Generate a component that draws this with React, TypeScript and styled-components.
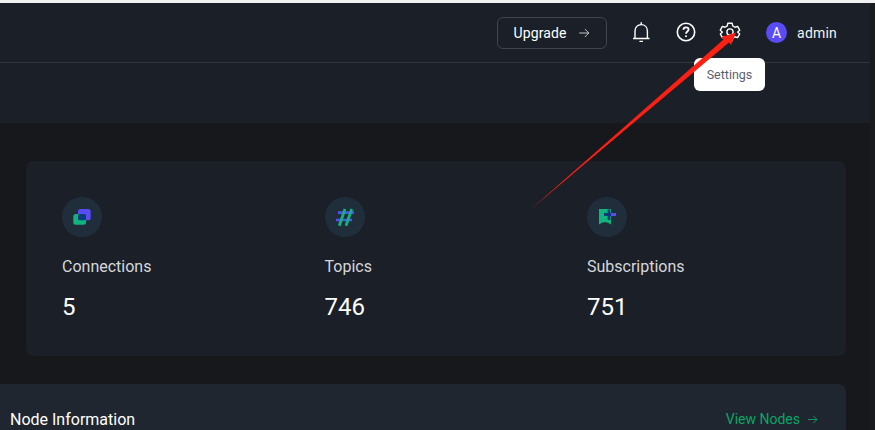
import * as React from "react"
import styled, { createGlobalStyle } from "styled-components"

const GlobalStyle = createGlobalStyle`
  html, body {
    margin: 0;
    padding: 0;
    height: 430px;
    overflow: hidden;
    background: #1a1b1d;
    font-family: Roboto, "Liberation Sans", sans-serif;
  }
`

const stats = [
  { label: "Connections", value: "5", icon: "connections" },
  { label: "Topics", value: "746", icon: "topics" },
  { label: "Subscriptions", value: "751", icon: "subscriptions" },
]

function StatGlyph({ kind }: { kind: string }) {
  if (kind === "connections") {
    return (
      <svg width="20" height="20" viewBox="0 0 20 20">
        <rect x="6" y="2" width="12.7" height="11.3" rx="2.5" fill="#5a4cf5" />
        <rect x="1.3" y="7" width="12.7" height="10.7" rx="2.5" fill="#0fb57c" />
        <rect x="6" y="7" width="8" height="6.3" rx="1.5" fill="#0b3a7d" />
      </svg>
    )
  }
  if (kind === "topics") {
    return (
      <svg width="20" height="20" viewBox="0 0 20 20">
        <path d="M3 5.6H19M1 13H17" stroke="#5a4cf5" strokeWidth="2.6" fill="none" />
        <path d="M10 2L4.3 18.7M16.7 2L11 18.7" stroke="#0fb57c" strokeWidth="2.8" fill="none" />
      </svg>
    )
  }
  return (
    <svg width="20" height="20" viewBox="0 0 20 20">
      <path d="M2 2H14V17.5Q8 12.5 2 17.5Z" fill="#0fb57c" />
      <path d="M7 7.5H19" stroke="#5a4cf5" strokeWidth="3" fill="none" />
      <path d="M7 7.5H14" stroke="#0b3a7d" strokeWidth="3" fill="none" />
      <path d="M12 2.5V13" stroke="#0b3a7d" strokeWidth="2.6" fill="none" />
    </svg>
  )
}

function ArrowRight({ size }: { size: number }) {
  return (
    <svg width={size} height={size} viewBox="0 0 16 16" fill="none" stroke="currentColor" strokeWidth="1.1">
      <path d="M2.5 8H13.5M9 3.5L13.5 8L9 12.5" />
    </svg>
  )
}

export default function App() {
  return (
    <>
      <GlobalStyle />
      <Page>
        <TopEdge />
        <Header>
          <UpgradeButton>
            Upgrade
            <ArrowRight size={14} />
          </UpgradeButton>
          <IconSlot>
            <svg width="22" height="22" viewBox="0 0 22 22" fill="none" stroke="#fff" strokeWidth="1.4">
              <path d="M3 17.5H19.5M5 17.5V10C5 6.2 7.6 3.6 11.2 3.6C14.8 3.6 17.4 6.2 17.4 10V17.5" />
              <path d="M11.2 1.6V3.2M10 20.4H12.4" strokeLinecap="round" />
            </svg>
          </IconSlot>
          <IconSlot>
            <svg width="22" height="22" viewBox="0 0 22 22" fill="none" stroke="#fff">
              <circle cx="11" cy="11" r="8.7" strokeWidth="1.6" />
              <path d="M8.4 8.8C8.4 7.2 9.6 6.3 11 6.3C12.5 6.3 13.6 7.2 13.6 8.6C13.6 10.5 11 10.6 11 12.8" strokeWidth="1.8" />
              <path d="M11 14.4V16" strokeWidth="1.9" />
            </svg>
          </IconSlot>
          <IconSlot>
            <svg width="22" height="22" viewBox="0 0 24 24" fill="none" stroke="#fff" strokeWidth="1.5" strokeLinejoin="round">
              <path d="M9.6 2.5H14.4L15 5.4L17.4 6.8L20.3 5.9L22.6 10L20.4 12L20.4 12.2L22.6 14.1L20.3 18.2L17.4 17.2L15 18.7L14.4 21.5H9.6L9 18.7L6.6 17.2L3.7 18.2L1.4 14.1L3.6 12.2V11.9L1.4 10L3.7 5.9L6.6 6.8L9 5.4Z" />
              <circle cx="12" cy="12" r="3.4" />
            </svg>
          </IconSlot>
          <UserBlock>
            <Avatar>A</Avatar>
            <UserName>admin</UserName>
          </UserBlock>
        </Header>
        <SubHeader />
        <Main>
          <StatsCard>
            {stats.map(stat => (
              <Stat key={stat.label}>
                <StatIcon>
                  <StatGlyph kind={stat.icon} />
                </StatIcon>
                <StatLabel>{stat.label}</StatLabel>
                <StatValue>{stat.value}</StatValue>
              </Stat>
            ))}
          </StatsCard>
          <NodeCard>
            <NodeTitle>Node Information</NodeTitle>
            <NodeLink>
              View Nodes
              <ArrowRight size={13} />
            </NodeLink>
          </NodeCard>
        </Main>
        <Tooltip>Settings</Tooltip>
        <Annotation width="875" height="430" viewBox="0 0 875 430">
          <path d="M530 210L723.5 39.5L721.5 37L736 32.5L731 45L729 42.5Z" fill="#fb1f14" />
        </Annotation>
      </Page>
    </>
  )
}

const Page = styled.div`
  position: relative;
  width: 875px;
  height: 430px;
  overflow: hidden;
`

const TopEdge = styled.div`
  height: 3px;
  background: #f0f0f0;
`

const Header = styled.header`
  box-sizing: border-box;
  width: 870px;
  height: 60px;
  padding: 0 33px 0 0;
  display: flex;
  align-items: center;
  justify-content: flex-end;
  background: #1b1f28;
  border-bottom: 1px solid #33363d;
`

const UpgradeButton = styled.button`
  box-sizing: border-box;
  width: 110px;
  height: 32px;
  margin: 0 12px 0 0;
  padding: 0;
  display: flex;
  align-items: center;
  justify-content: center;
  gap: 10px;
  background: transparent;
  border: 1px solid #42454c;
  border-radius: 6px;
  color: #fff;
  font: 400 14px Roboto, sans-serif;
  letter-spacing: 0.15px;
  svg {
    color: #c8c9cc;
  }
`

const IconSlot = styled.div`
  width: 44.5px;
  margin-bottom: 2px;
  display: flex;
  justify-content: center;
`

const UserBlock = styled.div`
  margin-left: 13.5px;
  display: flex;
  align-items: center;
  gap: 10px;
`

const Avatar = styled.div`
  width: 21px;
  height: 21px;
  border-radius: 50%;
  display: flex;
  align-items: center;
  justify-content: center;
  background: #5a4cf5;
  color: #fff;
  font-size: 14px;
`

const UserName = styled.span`
  color: #f2f2f3;
  font-size: 14px;
  letter-spacing: 0.2px;
`

const SubHeader = styled.div`
  width: 870px;
  height: 60px;
  background: #1b1f28;
`

const Main = styled.main`
  box-sizing: border-box;
  width: 870px;
  height: 307px;
  padding-top: 38px;
  background: #17181b;
`

const StatsCard = styled.section`
  box-sizing: border-box;
  width: 820px;
  height: 195px;
  margin-left: 26px;
  padding: 36px;
  display: grid;
  grid-template-columns: repeat(3, 262.5px);
  background: #1b1f28;
  border-radius: 8px;
`

const Stat = styled.div`
  display: flex;
  flex-direction: column;
  align-items: flex-start;
`

const StatIcon = styled.div`
  width: 40px;
  height: 40px;
  border-radius: 50%;
  display: flex;
  align-items: center;
  justify-content: center;
  background: #202e3c;
`

const StatLabel = styled.div`
  margin-top: 20px;
  color: #d5d7da;
  font-size: 16px;
  line-height: 20px;
`

const StatValue = styled.div`
  margin-top: 14px;
  color: #fff;
  font-size: 24px;
  line-height: 32px;
`

const NodeCard = styled.section`
  box-sizing: border-box;
  width: 846px;
  height: 80px;
  margin-top: 28px;
  padding: 25px 27px 0 10px;
  display: flex;
  align-items: flex-start;
  justify-content: space-between;
  background: #1f2630;
  border-radius: 0 8px 0 0;
`

const NodeTitle = styled.div`
  color: #fff;
  font-size: 16px;
  line-height: 22px;
`

const NodeLink = styled.div`
  display: flex;
  align-items: center;
  gap: 6px;
  color: #0ca565;
  font-size: 14px;
  line-height: 20px;
`

const Tooltip = styled.div`
  position: absolute;
  left: 694px;
  top: 58px;
  box-sizing: border-box;
  width: 71px;
  height: 33px;
  display: flex;
  align-items: center;
  justify-content: center;
  background: #fff;
  border-radius: 6px;
  color: #5a5f70;
  font-size: 12.5px;
`

const Annotation = styled.svg`
  position: absolute;
  left: 0;
  top: 0;
`
